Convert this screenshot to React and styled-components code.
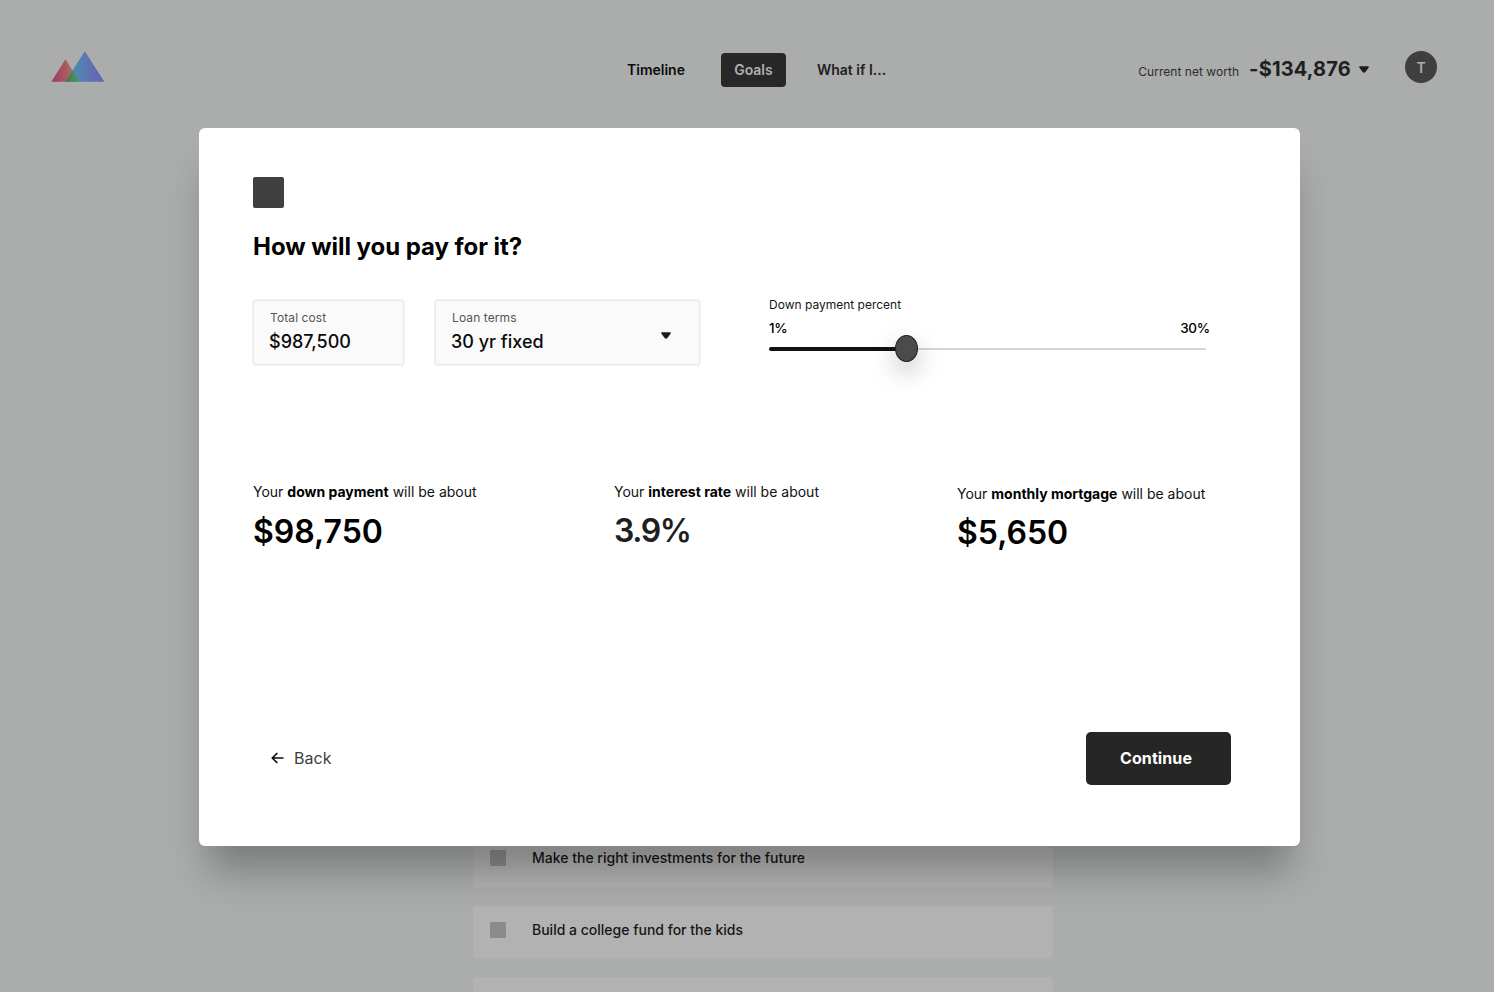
import React from "react";
import styled, { createGlobalStyle } from "styled-components";

const GlobalStyle = createGlobalStyle`
  * { box-sizing: border-box; }
  html, body { margin: 0; padding: 0; }
  body { font-family: Inter, "Liberation Sans", sans-serif; color: #000; overflow: hidden; }
`;

const Page = styled.div`
  position: relative;
  width: 1494px;
  height: 992px;
  overflow: hidden;
  background: #abadac;
  display: flex;
  flex-direction: column;
`;

const Header = styled.header`
  display: flex;
  flex: none;
  align-items: center;
  height: 140px;
  padding: 0 57px 0 51px;
`;

const Logo = styled.svg`
  display: block;
  width: 54px;
  height: 32px;
  margin-bottom: 8px;
`;

const Nav = styled.nav`
  display: flex;
  align-items: center;
  margin-left: 510px;
`;

const NavItem = styled.a`
  display: flex;
  align-items: center;
  justify-content: center;
  height: 34px;
  width: ${(p) => (p.$active ? "65px" : "auto")};
  padding: 0 ${(p) => (p.$active ? 0 : 12)}px 2px;
  margin-right: ${(p) => p.$gap || 0}px;
  border-radius: 4px;
  font-size: 14px;
  font-weight: 600;
  white-space: nowrap;
  color: ${(p) => p.$color};
  background: ${(p) => (p.$active ? "#272727" : "transparent")};
`;

const Account = styled.div`
  display: flex;
  align-items: center;
  margin-left: auto;
`;

const NetLabel = styled.span`
  font-size: 12px;
  letter-spacing: 0.04px;
  line-height: 16px;
  padding-top: 4px;
  color: #2b2c2b;
  white-space: nowrap;
`;

const NetValue = styled.span`
  margin-left: 10px;
  font-size: 20px;
  font-weight: 700;
  line-height: 24px;
  margin-bottom: 2px;
  letter-spacing: 0.18px;
  color: #1f1f1f;
  white-space: nowrap;
`;

const Caret = styled.svg`
  display: block;
  width: 10px;
  height: 7px;
  margin: ${(p) => p.$margin || 0};
`;

const Avatar = styled.div`
  display: flex;
  align-items: center;
  justify-content: center;
  width: 32px;
  height: 32px;
  margin: 0 0 6px 36px;
  border-radius: 50%;
  background: #3f3f3f;
  color: #adadad;
  font-size: 14px;
  font-weight: 600;
`;

const GoalList = styled.ul`
  list-style: none;
  width: 580px;
  margin: 694px 0 0 473px;
  padding: 0;
  display: flex;
  flex-direction: column;
  gap: 19px;
`;

const Goal = styled.li`
  display: flex;
  align-items: center;
  gap: 26px;
  height: ${(p) => p.$height || 52}px;
  flex: none;
  padding: 0 17px ${(p) => (p.$height ? p.$height - 47 : 4)}px;
  border-radius: 4px;
  background: #b2b2b2;
`;

const GoalText = styled.span`
  padding-bottom: 1px;
  font-size: 14px;
  line-height: 17px;
  font-weight: 500;
  color: #161616;
`;

const GoalMark = styled.span`
  width: 16px;
  height: 16px;
  border-radius: 1px;
  background: #8b8b8b;
`;

const Dialog = styled.section`
  position: absolute;
  left: 199px;
  top: 128px;
  width: 1101px;
  height: 718px;
  padding: 49px 69px 61px 54px;
  display: flex;
  flex-direction: column;
  border-radius: 6px;
  background: #fff;
  box-shadow: 0 34px 36px -9px rgba(0, 0, 0, 0.28);
`;

const GoalBadge = styled.div`
  width: 31px;
  height: 31px;
  border-radius: 2px;
  background: #404040;
`;

const Title = styled.h1`
  margin: 23px 0 0;
  font-size: 24px;
  font-weight: 700;
  line-height: 32px;
  white-space: nowrap;
  letter-spacing: -0.05px;
`;

const Inputs = styled.div`
  display: flex;
  align-items: flex-start;
  margin-top: 34px;
  height: 100px;
`;

const Field = styled.div`
  display: flex;
  align-items: center;
  justify-content: space-between;
  flex: none;
  width: ${(p) => p.$width}px;
  height: 65px;
  margin: 3px 31px 0 0;
  padding: 0 28px 2px 15px;
  border: 1px solid #e9e9e9;
  border-radius: 3px;
  background: #fafafa;
  box-shadow: 0 0 0 1px #f3f3f3;
`;

const FieldLabel = styled.div`
  padding-left: 1px;
  font-size: 12px;
  line-height: 16px;
  letter-spacing: 0.1px;
  color: #555;
  margin-bottom: 4px;
`;

const FieldValue = styled.div`
  font-size: 18px;
  line-height: 24px;
  font-weight: 500;
  white-space: nowrap;
  color: #0a0a0a;
`;

const SliderBlock = styled.div`
  width: 441px;
  margin-left: 38px;
`;

const SliderLabel = styled.div`
  font-size: 12px;
  line-height: 16px;
  color: #161616;
`;

const SliderRange = styled.div`
  display: flex;
  justify-content: space-between;
  margin-top: 6px;
  font-size: 13.5px;
  letter-spacing: -0.25px;
  line-height: 18px;
  font-weight: 500;
`;

const SliderTrack = styled.div`
  display: flex;
  align-items: center;
  width: 437px;
  height: 28px;
  margin-top: -2px;
`;

const SliderFill = styled.div`
  width: 127px;
  height: 4px;
  border-radius: 2px 0 0 2px;
  background: #111;
`;

const SliderThumb = styled.div`
  width: 23px;
  height: 27px;
  margin: 0 -1px 1px;
  border: 1px solid #222;
  border-radius: 50%;
  background: #4b4b4b;
  box-shadow: 0 10px 24px rgba(0, 0, 0, 0.25);
  z-index: 1;
`;

const SliderRest = styled.div`
  flex: 1;
  height: 2px;
  background: #d5d5d5;
`;

const Results = styled.div`
  display: flex;
  margin-top: 86px;
`;

const Result = styled.div`
  width: ${(p) => p.$width}px;
  padding-top: ${(p) => p.$drop || 0}px;
`;

const ResultLabel = styled.p`
  margin: 0;
  font-size: 14px;
  line-height: 18px;
  white-space: nowrap;
  color: #111;
  b { font-weight: 700; color: #000; }
`;

const ResultValue = styled.div`
  margin-top: ${(p) => p.$top}px;
  font-size: 32px;
  line-height: 40px;
  font-weight: 600;
  letter-spacing: ${(p) => p.$track || 0}px;
  color: ${(p) => p.$color || "#000"};
`;

const Actions = styled.footer`
  display: flex;
  align-items: center;
  justify-content: space-between;
  margin-top: auto;
`;

const BackButton = styled.button`
  display: flex;
  align-items: center;
  gap: 10px;
  padding: 0 0 2px 18px;
  border: 0;
  background: none;
  font: 400 16px/20px Inter, sans-serif;
  letter-spacing: 0.05px;
  color: #404040;
  svg { display: block; }
`;

const ContinueButton = styled.button`
  width: 145px;
  height: 53px;
  padding: 0 5px 2px 0;
  border: 0;
  border-radius: 5px;
  background: #262626;
  color: #fff;
  font: 700 16px/20px Inter, sans-serif;
  letter-spacing: 0.1px;
`;

const DownCaret = ({ margin }) => (
  <Caret viewBox="0 0 10 7" $margin={margin}>
    <path d="M.8.3h8.400c.4 0 .6.2.6.6 0 .4-.2.7-.4 1L6.400 6c-.8.9-2 .9-2.800 0L.6 1.900C.4 1.600.2 1.300.2.900c0-.4.2-.6.6-.6z" fill="#1c1c1c" />
  </Caret>
);

export default function App() {
  return (
    <>
      <GlobalStyle />
      <Page>
        <Header>
          <Logo viewBox="0 0 54 32">
            <defs>
              <linearGradient id="peakWarm" x1="0" y1="0" x2="1" y2="0">
                <stop offset="0.15" stopColor="#a0405f" />
                <stop offset="0.8" stopColor="#ad745c" />
              </linearGradient>
              <linearGradient id="peakCool" x1="0" y1="0" x2="1" y2="0">
                <stop offset="0.1" stopColor="#4794ab" />
                <stop offset="0.65" stopColor="#6070b3" />
                <stop offset="1" stopColor="#5b64b6" />
              </linearGradient>
              <linearGradient id="peakOverlap" x1="0" y1="0" x2="1" y2="0">
                <stop offset="0" stopColor="#496f58" />
                <stop offset="1" stopColor="#4c9c55" />
              </linearGradient>
            </defs>
            <path d="M14.5 9.2L28.5 31.700H.3z" fill="url(#peakWarm)" />
            <path d="M33.800 1.200L53.300 31.700H14.300z" fill="url(#peakCool)" />
            <path d="M21.300 20.600L28.500 31.700H14.300z" fill="url(#peakOverlap)" />
          </Logo>
          <Nav>
            <NavItem $color="#0c0c0c" $gap={24}>Timeline</NavItem>
            <NavItem $active $color="#b0b0b0" $gap={19}>Goals</NavItem>
            <NavItem $color="#222">What if I...</NavItem>
          </Nav>
          <Account>
            <NetLabel>Current net worth</NetLabel>
            <NetValue>-$134,876</NetValue>
            <DownCaret margin="0 0 2px 8px" />
            <Avatar>T</Avatar>
          </Account>
        </Header>
        <GoalList>
          <Goal $height={53}><GoalMark /><GoalText>Make the right investments for the future</GoalText></Goal>
          <Goal><GoalMark /><GoalText>Build a college fund for the kids</GoalText></Goal>
          <Goal />
        </GoalList>
        <Dialog>
          <GoalBadge />
          <Title>How will you pay for it?</Title>
          <Inputs>
            <Field $width={151}>
              <div>
                <FieldLabel>Total cost</FieldLabel>
                <FieldValue>$987,500</FieldValue>
              </div>
            </Field>
            <Field $width={265}>
              <div>
                <FieldLabel>Loan terms</FieldLabel>
                <FieldValue>30 yr fixed</FieldValue>
              </div>
              <DownCaret margin="8px 0 0" />
            </Field>
            <SliderBlock>
              <SliderLabel>Down payment percent</SliderLabel>
              <SliderRange><span>1%</span><span>30%</span></SliderRange>
              <SliderTrack>
                <SliderFill />
                <SliderThumb />
                <SliderRest />
              </SliderTrack>
            </SliderBlock>
          </Inputs>
          <Results>
            <Result $width={361}>
              <ResultLabel>Your <b>down payment</b> will be about</ResultLabel>
              <ResultValue $top={11}>$98,750</ResultValue>
            </Result>
            <Result $width={343}>
              <ResultLabel>Your <b>interest rate</b> will be about</ResultLabel>
              <ResultValue $top={10} $color="#1f1f1f" $track={-1.4}>3.9%</ResultValue>
            </Result>
            <Result $drop={2}>
              <ResultLabel>Your <b>monthly mortgage</b> will be about</ResultLabel>
              <ResultValue $top={10}>$5,650</ResultValue>
            </Result>
          </Results>
          <Actions>
            <BackButton>
              <svg width="13" height="12" viewBox="0 0 13 12" fill="none" stroke="#0a0a0a" strokeWidth="1.6">
                <path d="M12.5 6H1.5M6.3 1L1.3 6l5 5" />
              </svg>
              Back
            </BackButton>
            <ContinueButton>Continue</ContinueButton>
          </Actions>
        </Dialog>
      </Page>
    </>
  );
}
